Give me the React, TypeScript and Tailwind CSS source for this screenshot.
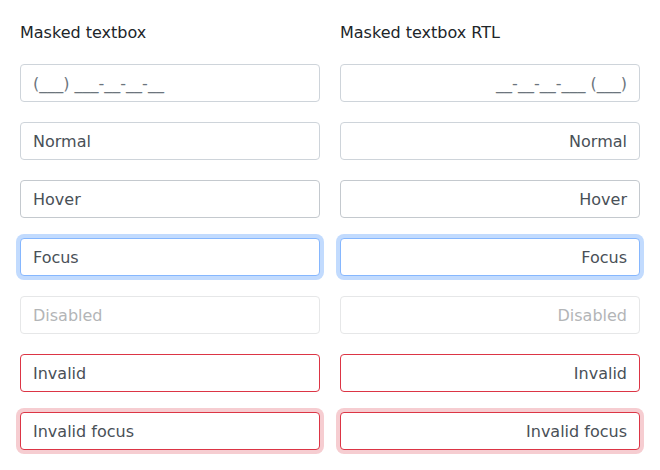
const states = [
  { label: 'Normal', cls: 'border-[#ced4da]' },
  { label: 'Hover', cls: 'border-[#c4c9ce]' },
  { label: 'Focus', cls: 'border-[#86b7fe] ring-4 ring-[#c2dbfe]' },
  { label: 'Disabled', cls: 'border-[#e6e7e8] text-[#b3b5b7]' },
  { label: 'Invalid', cls: 'border-[#dc3545]' },
  { label: 'Invalid focus', cls: 'border-[#dc3545] ring-4 ring-[#f6cdd1]' },
];

function Column({ title, rtl }: { title: string; rtl?: boolean }) {
  const align = rtl ? 'justify-end' : 'justify-start';
  return (
    <div className="flex w-[300px] flex-col gap-5">
      <div className="h-6 pt-px text-base leading-6 text-[#212529]">{title}</div>
      <div
        className={`flex h-[38px] items-center rounded-[4px] border border-[#ced4da] bg-white px-3 pt-[2px] text-base text-[#6c757d] ${align}`}
      >
        {rtl ? '__-__-__-___ (___)' : '(___) ___-__-__-__'}
      </div>
      {states.map((s) => (
        <div
          key={s.label}
          className={`flex h-[38px] items-center rounded-[4px] border bg-white px-3 pt-[2px] text-base text-[#495057] ${align} ${s.cls}`}
        >
          {s.label}
        </div>
      ))}
    </div>
  );
}

export default function App() {
  return (
    <div className="flex min-h-screen gap-5 bg-white p-5 font-['DejaVu_Sans',sans-serif]">
      <Column title="Masked textbox" />
      <Column title="Masked textbox RTL" rtl />
    </div>
  );
}
